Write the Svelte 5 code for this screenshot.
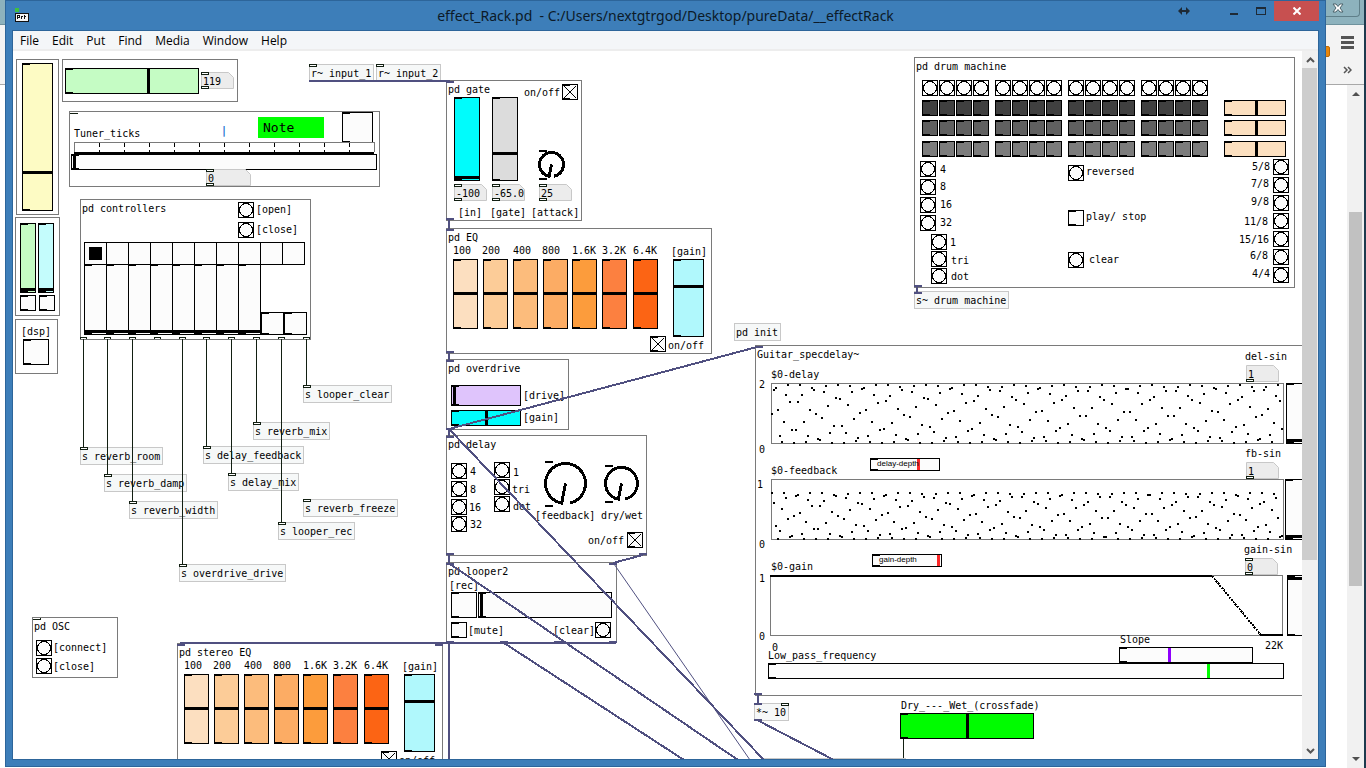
<script>
  const ORIGIN_X = 13;
  const ORIGIN_Y = 51;
  const place = (x, y, w, h) =>
    `left:${x - ORIGIN_X}px;top:${y - ORIGIN_Y}px;` + (w ? `width:${w}px;height:${h}px` : '');

  const menus = ['File', 'Edit', 'Put', 'Find', 'Media', 'Window', 'Help'];

  const frames = [
    [16, 59, 43, 156], [62, 59, 176, 43], [69, 111, 311, 76], [15, 217, 45, 99],
    [15, 319, 43, 55], [80, 199, 231, 141], [446, 80, 136, 141], [446, 228, 266, 126],
    [446, 359, 123, 71], [446, 435, 201, 121], [446, 562, 171, 81], [177, 643, 266, 126],
    [32, 617, 86, 61], [914, 57, 381, 231], [755, 345, 600, 351],
    [771, 383, 513, 61], [771, 479, 513, 61], [770, 575, 513, 61]
  ];

  const objects = [
    ['r~ input_1', 309, 64, 1], ['r~ input_2', 376, 64, 1], ['pd init', 734, 323, 0],
    ['s~ drum machine', 914, 291, 0], ['s looper_clear', 303, 385, 1],
    ['s reverb_mix', 253, 422, 1], ['s reverb_room', 80, 447, 1],
    ['s delay_feedback', 203, 446, 1], ['s reverb_damp', 104, 474, 1],
    ['s delay_mix', 228, 473, 1], ['s reverb_width', 129, 501, 1],
    ['s reverb_freeze', 303, 499, 1], ['s looper_rec', 278, 522, 1],
    ['s overdrive_drive', 179, 564, 1], ['*~ 10', 754, 703, 0]
  ];

  const comments = [
    ['Tuner_ticks', 74, 137], ['pd controllers', 82, 212], ['pd gate', 448, 93],
    ['pd EQ', 448, 241], ['pd overdrive', 448, 372], ['pd delay', 448, 448],
    ['pd looper2', 448, 575], ['pd stereo EQ', 179, 656], ['pd OSC', 34, 630],
    ['pd drum machine', 916, 70], ['Guitar_specdelay~', 757, 358], ['$0-delay', 771, 378],
    ['2', 759, 388], ['0', 759, 453], ['$0-feedback', 771, 474], ['1', 757, 488],
    ['0', 759, 548], ['$0-gain', 771, 570], ['1', 759, 582], ['0', 759, 640],
    ['0', 772, 651], ['22K', 1265, 649]
  ];

  const bands = [
    ['100', 453, '#fcdfc0', 453], ['200', 483, '#fccc98', 482], ['400', 513, '#fcbc7c', 513],
    ['800', 543, '#fcac64', 542], ['1.6K', 572, '#fc9c3c', 572], ['3.2K', 602, '#fc8040', 602],
    ['6.4K', 633, '#fc6414', 633]
  ];
  const eq = (dx, dy) => [
    ...bands.map(([t, x, c, tx]) => [x + dx, 259 + dy, 25, 70, c, 292 + dy, [t, tx + dx, 254 + dy]]),
    [673 + dx, 259 + dy, 31, 78, '#b0f8fc', 285 + dy, ['[gain]', 671 + dx, 255 + dy]]
  ];

  // x, y, width, height, fill, handle position, label, handle colour
  const vertical = [
    [22, 63, 31, 148, '#fdfbc4', 171],
    [20, 223, 16, 70, '#c5fcc4', 288],
    [38, 223, 16, 70, '#c4fcfc', 288],
    ...Array.from({ length: 8 }, (_, i) => [84 + 22 * i, 264, 23, 71, '#fcfcfc', 330]),
    [454, 97, 26, 84, '#00fcfc', 176],
    [492, 97, 26, 84, '#dcdcdc', 152],
    ...eq(0, 0),
    ...eq(-269, 415),
    [1286, 383, 26, 61, '#fcfcfc', 439],
    [1285, 479, 26, 61, '#fcfcfc', 535],
    [1287, 575, 26, 61, '#fcfcfc', 577]
  ];
  const horizontal = [
    [65, 68, 134, 26, '#c5fcc4', 147],
    [71, 154, 306, 16, '#fcfcfc', 73],
    [451, 385, 70, 21, '#dfc4fc', 453, ['[drive]', 523, 399]],
    [451, 410, 70, 16, '#00fcfc', 485, ['[gain]', 523, 421]],
    [478, 592, 134, 26, '#fcfcfc', 480],
    [1224, 100, 62, 16, '#fce0c0', 1255],
    [1224, 120, 62, 16, '#fce0c0', 1255],
    [1224, 141, 62, 16, '#fce0c0', 1255],
    [870, 458, 70, 13, '#fcfcfc', 917, ['delay-depth', 877, 467, 'tiny'], '#fc2828'],
    [872, 554, 70, 13, '#fcfcfc', 937, ['gain-depth', 879, 563, 'tiny'], '#fc2828'],
    [1119, 647, 134, 16, '#fcfcfc', 1168, ['Slope', 1120, 643], '#9000fc'],
    [768, 663, 516, 16, '#fcfcfc', 1207, ['Low_pass_frequency', 768, 659], '#00fc00'],
    [900, 713, 134, 26, '#00fc00', 966, ['Dry_---_Wet_(crossfade)', 901, 709]]
  ];
  const sliders = [
    ...vertical.map(([x, y, w, h, fill, pos, label, ink]) => ({ x, y, w, h, fill, pos: pos - y - 1, label, ink, up: true })),
    ...horizontal.map(([x, y, w, h, fill, pos, label, ink]) => ({ x, y, w, h, fill, pos: pos - x - 1, label, ink, up: false }))
  ];
  const sliderValue = (s) =>
    s.up ? Math.round(100 - (100 * s.pos) / (s.h - 5)) : Math.round((100 * s.pos) / (s.w - 5));

  const groups = [922, 995, 1068, 1141];
  const stepXs = groups.flatMap((g) => [0, 17, 34, 51].map((d) => g + d));

  const bangs = [
    [238, 202, ['[open]', 256, 213]], [238, 222, ['[close]', 256, 233]],
    [36, 640, ['[connect]', 53, 651]], [36, 658, ['[close]', 53, 670]],
    [451, 463, ['4', 470, 475]], [451, 481, ['8', 470, 493]],
    [451, 499, ['16', 469, 511]], [451, 516, ['32', 470, 528]],
    [494, 462, ['1', 513, 476]], [494, 479, ['tri', 512, 493]], [494, 496, ['dot', 513, 510]],
    [595, 622, ['[clear]', 553, 634]],
    ...stepXs.map((x) => [x, 80]),
    [920, 161, ['4', 940, 173]], [920, 179, ['8', 940, 190]],
    [920, 197, ['16', 940, 208]], [920, 215, ['32', 940, 226]],
    [931, 234, ['1', 950, 246]], [931, 251, ['tri', 951, 264]], [931, 268, ['dot', 951, 280]],
    [1068, 165, ['reversed', 1086, 175]], [1068, 252, ['clear', 1089, 263]],
    [1273, 159, ['5/8', 1252, 170]], [1273, 177, ['7/8', 1251, 187]],
    [1273, 195, ['9/8', 1251, 205]], [1273, 213, ['11/8', 1244, 225]],
    [1273, 231, ['15/16', 1239, 243]], [1273, 249, ['6/8', 1250, 259]],
    [1273, 267, ['4/4', 1252, 277]]
  ];

  // x, y, size, checked, label, fill
  const toggles = [
    [20, 295, 16, false], [39, 295, 16, false], [23, 339, 26, false, ['[dsp]', 21, 335]],
    [342, 112, 31, false], [261, 312, 23, false], [284, 312, 23, false],
    [562, 84, 16, true, ['on/off', 524, 96]], [650, 336, 16, true, ['on/off', 668, 349]],
    [627, 532, 16, true, ['on/off', 588, 544]], [381, 751, 16, true, ['on/off', 399, 764]],
    [451, 592, 26, false, ['[rec]', 449, 589]], [451, 622, 16, false, ['[mute]', 468, 634]],
    [1068, 210, 16, false, ['play/ stop', 1086, 220]],
    ...stepXs.map((x) => [x, 100, 16, false, null, '#404040']),
    ...stepXs.map((x) => [x, 120, 16, false, null, '#606060']),
    ...stepXs.map((x) => [x, 141, 16, false, null, '#7c7c7c'])
  ];

  // value, x, y, width, has inlet, label
  const numbers = [
    ['119', 201, 72, 33, 1], ['0', 206, 169, 45, 1],
    ['-100', 454, 184, 33, 1, ['[in]', 458, 216]],
    ['-65.0', 492, 184, 33, 1, ['[gate]', 490, 216]],
    ['25', 539, 184, 33, 1, ['[attack]', 531, 216]],
    ['1', 1246, 365, 33, 0, ['del-sin', 1245, 360]],
    ['1', 1246, 462, 33, 0, ['fb-sin', 1245, 457]],
    ['0', 1245, 558, 33, 1, ['gain-sin', 1244, 553]]
  ];

  // centre x, centre y, radius, mark x, top mark y, bottom mark y, label
  const knobs = [
    [551.5, 164.5, 12, 539, 150, 178, null],
    [565.5, 483.5, 20, 545, 461, 505, ['[feedback]', 535, 519]],
    [621.5, 483.5, 16, 605, 465, 501, ['dry/wet', 601, 519]]
  ];
  const knobArc = ([cx, cy, r]) => {
    const a = (101 * Math.PI) / 180;
    const b = (78 * Math.PI) / 180;
    return `M${cx} ${cy}L${cx + r * Math.cos(a)} ${cy + r * Math.sin(a)}A${r} ${r} 0 1 1 ${cx + r * Math.cos(b)} ${cy + r * Math.sin(b)}`;
  };

  const controlCords = [
    [83, 447], [107, 474], [132, 501], [182, 564], [206, 446],
    [231, 473], [256, 422], [281, 522], [306, 385]
  ];
  const outlets = [80, 104, 129, 154, 179, 203, 228, 253, 278, 303];
  const signalPorts = [
    [309, 80], [376, 80], [446, 81], [446, 218], [446, 229], [446, 351], [446, 360],
    [446, 428], [446, 436], [446, 553], [446, 563], [639, 553], [609, 563], [446, 641],
    [500, 641], [554, 641], [609, 641], [177, 644], [435, 644], [755, 346], [754, 693],
    [754, 703], [754, 719], [914, 285], [914, 292]
  ];
  const signalCords = [
    'M309 81H450', 'M449 219V230M449 352V361M449 428V437M449 554V564',
    'M449 429L757 347', 'M449 429L764 760', 'M450 564L738 760', 'M504 643L684 760',
    'M643 555L613 563', 'M180 643H616', 'M449 643V760', 'M758 694V704', 'M757 720L834 760',
    'M917 286V293'
  ];

  const dots = (fn, cy, amp) =>
    Array.from({ length: 256 }, (_, k) => `M${771 + 2 * k} ${Math.round(cy - amp * fn(k))}h2v2h-2z`).join('');
  const delayDots = dots(Math.sin, 413, 29);
  const feedbackDots = dots(Math.cos, 515, 23.5);
  const ticks = Array.from({ length: 11 }, (_, i) => `M${99.5 + 25 * i} 143v4m0 3v3`).join('');
</script>

{#snippet tag(label, id)}
  <label class="text {label[3] ?? ''}" for={id} style={place(label[1], label[2] - 9)}>{label[0]}</label>
{/snippet}

<div class="desktop">
  <div class="browser">
    <div class="tabs"><span class="tabs-close"><svg width="12" height="10" viewBox="0 0 12 10"><path d="M1 1h3l2 2.500 2-2.500h3L8 5l3 4H8L6 6.500 4 9H1l3-4z" fill="#fff" stroke="#4c636b" /></svg></span></div>
    <div class="tools">
      <span class="badge"></span>
      <div class="tool-icons">
        <svg width="13" height="13" viewBox="0 0 13 13"><path d="M0 1.500h13M0 6.500h13M0 11.500h13" stroke="#555" stroke-width="3" /></svg>
        <svg width="9" height="8" viewBox="0 0 9 8"><path d="M1 1l3 3-3 3M5 1l3 3-3 3" fill="none" stroke="#555" stroke-width="1.500" /></svg>
      </div>
    </div>
    <div class="page">
      <div class="page-scroll">
        <svg width="8" height="4" viewBox="0 0 8 4"><path d="M0 4l4-4 4 4z" fill="#505050" /></svg>
        <div class="page-thumb"></div>
        <svg width="8" height="4" viewBox="0 0 8 4"><path d="M0 0l4 4 4-4z" fill="#505050" /></svg>
      </div>
    </div>
  </div>

  <main class="window">
    <header class="titlebar">
      <svg class="app-icon" width="14" height="14" viewBox="0 0 14 14" shape-rendering="crispEdges">
        <path d="M0 0h4v4H0z" fill="#3fc03f" />
        <path d="M.5 5h12l1 1v7h-13z" fill="#f4f4f4" stroke="#111" />
        <path d="M2.500 11V7h2v2h-2M6.500 11V8h1M9.500 7v4M9 8.500h2" fill="none" stroke="#111" />
      </svg>
      <h1>effect_Rack.pd&nbsp; - C:/Users/nextgtrgod/Desktop/pureData/__effectRack</h1>
      <div class="window-buttons">
        <button class="dock" aria-label="Move"><svg width="12" height="8" viewBox="0 0 12 8"><path d="M0 4l4-4v3h4V0l4 4-4 4V5H4v3z" fill="#1e2a36" /></svg></button>
        <button aria-label="Minimize"><svg width="10" height="8" viewBox="0 0 10 8"><path d="M1 6h8v2H1z" fill="#1e2a36" /></svg></button>
        <button aria-label="Maximize"><svg width="10" height="8" viewBox="0 0 10 8" shape-rendering="crispEdges"><path d="M.5 1h9v6.500h-9z" fill="none" stroke="#1e2a36" /><path d="M0 0h10v2H0z" fill="#1e2a36" /></svg></button>
        <button class="close" aria-label="Close"><svg width="8" height="8" viewBox="0 0 8 8"><path d="M.5.5l7 7M7.500.5l-7 7" stroke="#fff" stroke-width="2" /></svg></button>
      </div>
    </header>

    <div class="client">
      <nav class="menubar">
        {#each menus as m}<button>{m}</button>{/each}
      </nav>

      <div class="workspace">
        <div class="canvas">
          {#each frames as [x, y, w, h]}
            <div class="frame" style={place(x, y, w, h)}></div>
          {/each}

          <div class="note" style={place(258, 117, 66, 21)}>Note</div>
          <div class="text mark" style={place(221, 125)}>|</div>

          {#each objects as [text, x, y, inlet]}
            <div class="object" class:inlet style={place(x, y, text.length * 6 + 5, 18)}>{text}</div>
          {/each}

          {#each comments as [text, x, y]}
            <div class="text" style={place(x, y - 9)}>{text}</div>
          {/each}

          {#each sliders as s, i}
            <input
              type="range"
              id="slider-{i}"
              class="slider"
              class:up={s.up}
              aria-label={s.label ? undefined : `Slider ${i + 1}`}
              value={sliderValue(s)}
              style="{place(s.x, s.y, s.w, s.h)};--fill:{s.fill};--pos:{s.pos}px;--ink:{s.ink ?? '#000'}"
            />
            {#if s.label}{@render tag(s.label, `slider-${i}`)}{/if}
          {/each}

          <div class="radios" style={place(84, 242)}>
            {#each Array(10) as _, i}
              <input type="radio" name="page" checked={i === 0} aria-label="Page {i + 1}" />
            {/each}
          </div>

          {#each toggles as [x, y, size, checked, label, fill], i}
            <input
              type="checkbox"
              id="toggle-{i}"
              class="toggle"
              {checked}
              aria-label={label ? undefined : `Toggle ${i + 1}`}
              style="{place(x, y, size, size)};--fill:{fill ?? '#fcfcfc'}"
            />
            {#if label}{@render tag(label, `toggle-${i}`)}{/if}
          {/each}

          {#each bangs as [x, y, label], i}
            <button id="bang-{i}" class="bang" aria-label={label ? undefined : `Step ${i + 1}`} style={place(x, y, 16, 16)}>
              <svg width="14" height="14" viewBox="0 0 14 14" shape-rendering="crispEdges"><circle cx="7" cy="7" r="6.500" fill="none" stroke="#000" /></svg>
            </button>
            {#if label}{@render tag(label, `bang-${i}`)}{/if}
          {/each}

          {#each numbers as [value, x, y, w, inlet, label], i}
            <div class="number" class:inlet style={place(x, y, w, 17)}>
              <svg width={w} height="17"><path d="M.5 .5H{w - 5.5}L{w - 0.5} 5.500V16.500H.5z" fill="#ececec" stroke="#c8c8c8" /></svg>
              <input id="number-{i}" {value} aria-label={label ? undefined : `Number ${i + 1}`} />
            </div>
            {#if label}{@render tag(label, `number-${i}`)}{/if}
          {/each}

          {#each knobs as k, i}
            <input
              type="range"
              id="knob-{i}"
              class="knob"
              value="0"
              aria-label={k[6] ? undefined : 'Attack'}
              style={place(k[0] - k[2], k[1] - k[2], k[2] * 2, k[2] * 2)}
            />
            {#if k[6]}{@render tag(k[6], `knob-${i}`)}{/if}
          {/each}

          <svg class="cords" aria-hidden="true">
            <g transform="translate({-ORIGIN_X} {-ORIGIN_Y})" fill="none" shape-rendering="crispEdges">
              <path d="M74.500 152V142.500H374.500V152" stroke="#7a7a7a" />
              <path d={ticks} stroke="#000" />
              <path d="M74 153H374" stroke="#000" stroke-width="2" />
              <path d="M70 113.500h7v-1M33 619.500h7v-2" stroke="#121f12" />

              {#each knobs as k}
                <path d={knobArc(k)} stroke="#000" stroke-width="3" />
                <path d="M{k[3]} {k[4] + 1}h8M{k[3]} {k[5] + 1}h8" stroke="#000" stroke-width="2" />
              {/each}

              <path d={delayDots + feedbackDots} fill="#000" />
              <path d="M770 576H1212M1260 635H1283" stroke="#000" stroke-width="2" />
              <path d="M1212 576L1261 635" stroke="#000" stroke-width="2" stroke-dasharray="2 1" />

              {#each outlets as x}
                <path d="M{x + 0.5} 339v-1.500h6v1.500" stroke="#121f12" />
              {/each}
              {#each controlCords as [x, y]}
                <path d="M{x + 0.5} 339V{y}" stroke="#121f12" />
              {/each}
              <path d="M903.500 739V759" stroke="#121f12" />
              <path d="M781.500 703.500h7v2h-7z" fill="#fff" stroke="#121f12" />
              <path d="M762 758.500H906" stroke="#c8c8c8" />

              <g stroke="#505080" stroke-width="2">
                {#each signalCords as d}<path {d} />{/each}
              </g>
              <path d="M614 564L750 760" stroke="#505080" shape-rendering="auto" />
              {#each signalPorts as [x, y]}
                <rect {x} {y} width="8" height="2" fill="#505080" />
              {/each}
            </g>
          </svg>
        </div>

        <div class="scrollbar">
          <button aria-label="Scroll up"><svg width="9" height="6" viewBox="0 0 9 6"><path d="M1 5l3.500-3.500L8 5" fill="none" stroke="#555" stroke-width="2" /></svg></button>
          <div class="track"><div class="thumb"></div></div>
          <button aria-label="Scroll down"><svg width="9" height="6" viewBox="0 0 9 6"><path d="M1 1l3.500 3.500L8 1" fill="none" stroke="#555" stroke-width="2" /></svg></button>
        </div>
      </div>
    </div>
  </main>
</div>

<style>
  :global(body) {
    margin: 0;
  }
  .desktop {
    position: relative;
    height: 100vh;
    overflow: hidden;
    font-family: 'Open Sans', 'Noto Sans', sans-serif;
  }
  .desktop,
  .desktop *,
  .desktop *::before,
  .desktop *::after {
    box-sizing: border-box;
  }
  button {
    margin: 0;
    padding: 0;
    border: 0;
    background: none;
    font: inherit;
    color: inherit;
  }
  svg {
    display: block;
  }

  .browser {
    display: flex;
    flex-direction: column;
    height: 100%;
    background: #fff;
    border-right: 2px solid #1d3a4e;
  }
  .tabs {
    flex: none;
    display: flex;
    justify-content: flex-end;
    height: 25px;
    padding-right: 4px;
    background: #8db2bd;
    border-bottom: 1px solid #6f929d;
  }
  .tabs-close {
    display: grid;
    place-items: center;
    justify-items: end;
    width: 44px;
    height: 17px;
    padding-right: 15px;
    border: 1px solid #5f7f89;
    border-top: 0;
    border-radius: 0 0 4px 4px;
  }
  .tools {
    flex: none;
    display: flex;
    justify-content: flex-end;
    height: 60px;
    background: #f3f3f3;
    border-bottom: 1px solid #a8a8a8;
  }
  .badge {
    width: 10px;
    height: 11px;
    margin: 21px 11px 0 0;
    border-radius: 2px;
    background: #e8860c;
    border: 1px solid #c06a00;
  }
  .tool-icons {
    display: flex;
    flex-direction: column;
    align-items: center;
    gap: 17px;
    padding: 11px 10px 0 0;
  }
  .page {
    flex: 1;
    display: flex;
    justify-content: flex-end;
  }
  .page-scroll {
    display: flex;
    flex-direction: column;
    align-items: center;
    width: 17px;
    padding: 7px 0;
    background: #f1f1f1;
  }
  .page-thumb {
    width: 13px;
    height: 374px;
    margin: 116px 0 auto;
    background: #c1c1c1;
  }

  .window {
    position: absolute;
    inset: 0 40px 1px 5px;
    display: flex;
    flex-direction: column;
    padding: 0 6px 6px;
    background: #3d7eb9;
    border: 1px solid #2d659a;
  }
  .titlebar {
    flex: none;
    display: grid;
    grid-template-columns: 1fr auto 1fr;
    height: 29px;
  }
  .app-icon {
    margin: 7px 0 0 3px;
  }
  h1 {
    margin: 0;
    font-family: 'Noto Sans', 'Open Sans', sans-serif;
    font-size: 14px;
    font-weight: 400;
    line-height: 29px;
    color: #0c1a28;
    white-space: nowrap;
  }
  .window-buttons {
    display: flex;
    justify-content: flex-end;
    height: 20px;
  }
  .window-buttons button {
    display: grid;
    place-items: center;
    width: 27px;
  }
  .window-buttons .dock {
    margin-right: 23px;
  }
  .window-buttons .close {
    width: 45px;
    background: #c75050;
  }
  .client {
    flex: 1;
    display: flex;
    flex-direction: column;
    min-height: 0;
    border: 1px solid #2d659a;
    background: #fff;
  }
  .menubar {
    flex: none;
    display: flex;
    gap: 13px;
    height: 20px;
    padding-left: 7px;
    background: #f4f6f8;
    border-bottom: 2px solid #ededed;
    font-size: 12px;
    line-height: 20px;
    color: #000;
  }
  .workspace {
    flex: 1;
    display: flex;
    min-height: 0;
  }
  .canvas {
    position: relative;
    flex: 1;
    min-width: 0;
    overflow: hidden;
    background: #fff;
    font-family: 'DejaVu Sans Mono', monospace;
    font-size: 10px;
    line-height: 12px;
    color: #000;
  }
  .scrollbar {
    flex: none;
    display: flex;
    flex-direction: column;
    width: 16px;
    background: #f0f0f0;
  }
  .scrollbar button {
    display: grid;
    place-items: center;
    height: 17px;
  }
  .track {
    flex: 1;
    display: flex;
    flex-direction: column;
  }
  .thumb {
    height: 73%;
    margin-right: 1px;
    background: #cdcdcd;
  }

  .frame,
  .object,
  .text,
  .note,
  .slider,
  .toggle,
  .bang,
  .radios,
  .number,
  .knob {
    position: absolute;
    margin: 0;
  }
  .frame {
    border: 1px solid #7a7a7a;
  }
  .text {
    white-space: pre;
  }
  .tiny {
    font-family: 'Liberation Sans', sans-serif;
    font-size: 8px;
  }
  .mark {
    color: #1a70d0;
    font-weight: 700;
  }
  .note {
    padding-left: 5px;
    background: #0f0;
    font-size: 13px;
    line-height: 21px;
  }
  .object {
    padding: 3px 0 0 1px;
    background: #f6f8f8;
    border: 1px solid #c8c8c8;
    white-space: pre;
  }
  .object.inlet::before,
  .number.inlet::before,
  .number::after {
    content: '';
    position: absolute;
    left: 0;
    width: 8px;
    height: 3px;
    border: 1px solid #121f12;
    background: #fff;
  }
  .object.inlet::before {
    left: -1px;
    top: -1px;
  }
  .number.inlet::before {
    top: 0;
  }
  .number::after {
    bottom: 0;
  }
  .number input {
    position: absolute;
    inset: 0;
    width: 100%;
    margin: 0;
    padding: 2px 0 0 2px;
    border: 0;
    background: none;
    font: inherit;
    color: inherit;
  }
  .slider {
    appearance: none;
    border: 1px solid #000;
    border-radius: 0;
    background:
      linear-gradient(var(--ink), var(--ink)) var(--pos) 0 / 3px 100% no-repeat,
      linear-gradient(#000, #000) 0 0 / 7px 1px no-repeat,
      linear-gradient(#000, #000) 0 100% / 7px 1px no-repeat,
      var(--fill);
  }
  .slider.up {
    background:
      linear-gradient(var(--ink), var(--ink)) 0 var(--pos) / 100% 3px no-repeat,
      linear-gradient(#000, #000) 0 0 / 7px 1px no-repeat,
      linear-gradient(#000, #000) 0 100% / 7px 1px no-repeat,
      var(--fill);
  }
  .slider::-webkit-slider-thumb {
    appearance: none;
    width: 3px;
    height: 3px;
    background: none;
  }
  .knob {
    opacity: 0;
  }
  .toggle {
    appearance: none;
    border: 1px solid #000;
    background:
      linear-gradient(#000, #000) 0 0 / 7px 1px no-repeat,
      linear-gradient(#000, #000) 0 100% / 7px 1px no-repeat,
      var(--fill);
  }
  .toggle:checked {
    background:
      linear-gradient(#000, #000) 0 0 / 7px 1px no-repeat,
      linear-gradient(#000, #000) 0 100% / 7px 1px no-repeat,
      linear-gradient(45deg, transparent 47%, #000 47%, #000 53%, transparent 53%) 50% / 12px 12px no-repeat,
      linear-gradient(135deg, transparent 47%, #000 47%, #000 53%, transparent 53%) 50% / 12px 12px no-repeat,
      var(--fill);
  }
  .bang {
    border: 1px solid #000;
    background: #fcfcfc;
  }
  .radios {
    display: flex;
    border: 1px solid #000;
    border-left: 0;
    background: #fcfcfc;
  }
  .radios input {
    appearance: none;
    width: 22px;
    height: 21px;
    margin: 0;
    padding: 4px;
    border-left: 1px solid #000;
  }
  .radios input:checked {
    background: content-box #000;
  }
  .cords {
    position: absolute;
    inset: 0;
    width: 100%;
    height: 100%;
    pointer-events: none;
  }
</style>
